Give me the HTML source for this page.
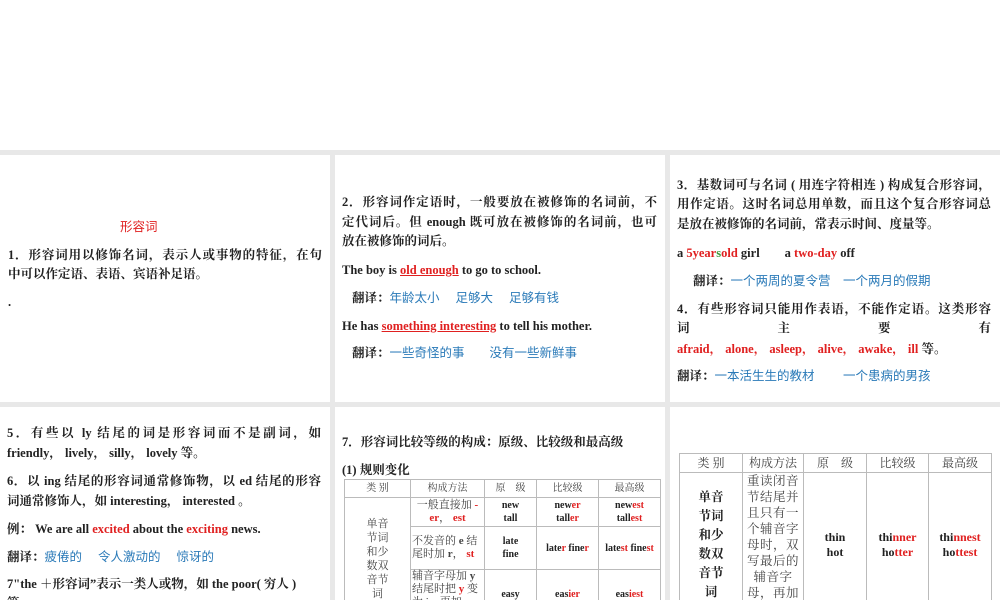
<!DOCTYPE html>
<html><head><meta charset="utf-8"><style>
*{margin:0;padding:0;box-sizing:border-box}
body{width:1000px;height:600px;background:#e8e8e8;position:relative;overflow:hidden;font-family:"Liberation Serif","Noto Serif CJK SC",serif;font-weight:700;color:#222}
.p{position:absolute;background:#fff;overflow:hidden}
.l{position:absolute;white-space:nowrap;font-size:12.5px;line-height:18px}
.j{text-align:justify;text-align-last:justify;white-space:normal}
.r{color:#e02020}.b{color:#2a7ab8;font-weight:400;font-family:"Liberation Sans","Noto Sans CJK SC",sans-serif}
.g{color:#3a9a3a}
.u{text-decoration:underline}
table{position:absolute;border-collapse:collapse;font-size:10px;table-layout:fixed}
td{border:1px solid #bbb;text-align:center;vertical-align:middle;line-height:13px;padding:0 1px}
.h td{font-weight:400;color:#444;font-family:"Liberation Serif","Noto Serif CJK SC",serif}
.n{font-weight:400;color:#444}
</style></head><body>
<div class="p" style="left:0;top:0;width:1000px;height:150px"></div>
<div class="p" style="left:0;top:155px;width:330px;height:247px">
<div class="l r" style="left:120px;top:63px;font-weight:400;font-family:'Liberation Sans','Noto Sans CJK SC',sans-serif">形容词</div>
<div class="l j" style="left:8px;top:91px;width:314px">1．形容词用以修饰名词，表示人或事物的特征，在句</div>
<div class="l" style="left:8px;top:110px">中可以作定语、表语、宾语补足语。</div>
<div class="l" style="left:8px;top:138px">.</div>
</div>
<div class="p" style="left:335px;top:155px;width:330px;height:247px">
<div class="l j" style="left:7px;top:38px;width:315px">2．形容词作定语时，一般要放在被修饰的名词前，不</div>
<div class="l j" style="left:7px;top:58px;width:315px">定代词后。但 enough 既可放在被修饰的名词前，也可</div>
<div class="l" style="left:7px;top:77px">放在被修饰的词后。</div>
<div class="l" style="left:7px;top:106px">The boy is <span class="r u">old enough</span> to go to school.</div>
<div class="l" style="left:17px;top:134px">翻译：<span class="b">年龄太小　 足够大　 足够有钱</span></div>
<div class="l" style="left:7px;top:162px">He has <span class="r u">something interesting</span> to tell his mother.</div>
<div class="l" style="left:17px;top:189px">翻译：<span class="b">一些奇怪的事　　没有一些新鲜事</span></div>
</div>
<div class="p" style="left:670px;top:155px;width:330px;height:247px">
<div class="l j" style="left:7px;top:21px;width:314px">3．基数词可与名词 ( 用连字符相连 ) 构成复合形容词，</div>
<div class="l j" style="left:7px;top:40px;width:314px">用作定语。这时名词总用单数，而且这个复合形容词总</div>
<div class="l" style="left:7px;top:60px">是放在被修饰的名词前，常表示时间、度量等。</div>
<div class="l" style="left:7px;top:89px">a <span class="r">5year<span class="g">s</span>old</span> girl　　a <span class="r">two-day</span> off</div>
<div class="l" style="left:23px;top:117px">翻译：<span class="b">一个两周的夏令营　一个两月的假期</span></div>
<div class="l j" style="left:7px;top:145px;width:314px">4．有些形容词只能用作表语，不能作定语。这类形容</div>
<div class="l j" style="left:7px;top:164px;width:314px">词 主 要 有</div>
<div class="l r" style="left:7px;top:185px">afraid， alone， asleep， alive， awake， ill <span style="color:#222">等。</span></div>
<div class="l" style="left:7px;top:212px">翻译：<span class="b">一本活生生的教材　　 一个患病的男孩</span></div>
</div>
<div class="p" style="left:0;top:407px;width:330px;height:193px">
<div class="l j" style="left:7px;top:17px;width:314px">5．有些以 ly 结尾的词是形容词而不是副词，如</div>
<div class="l" style="left:7px;top:37px">friendly， lively， silly， lovely 等。</div>
<div class="l j" style="left:7px;top:65px;width:314px">6．以 ing 结尾的形容词通常修饰物，以 ed 结尾的形容</div>
<div class="l" style="left:7px;top:85px">词通常修饰人，如 interesting， interested 。</div>
<div class="l" style="left:7px;top:113px">例： We are all <span class="r">excited</span> about the <span class="r">exciting</span> news.</div>
<div class="l" style="left:7px;top:141px">翻译：<span class="b">疲倦的　 令人激动的　 惊讶的</span></div>
<div class="l" style="left:7px;top:168px">7"the ＋形容词”表示一类人或物，如 the poor( 穷人 )</div>
<div class="l" style="left:7px;top:187px">等。</div>
</div>
<div class="p" style="left:335px;top:407px;width:330px;height:193px">
<div class="l" style="left:7px;top:26px">7．形容词比较等级的构成：原级、比较级和最高级</div>
<div class="l" style="left:7px;top:54px">(1) 规则变化</div>
<table style="left:9px;top:72px;width:316px">
<col style="width:66px"><col style="width:74px"><col style="width:52px"><col style="width:62px"><col style="width:62px">
<tr class="h" style="height:18px"><td>类 别</td><td>构成方法</td><td>原　级</td><td>比较级</td><td>最高级</td></tr>
<tr style="height:29px"><td rowspan="3" class="n" style="font-size:11px;line-height:14px">单音<br>节词<br>和少<br>数双<br>音节<br>词</td><td class="n" style="font-size:11px">一般直接加 <b class="r">-<br>er</b>， <b class="r">est</b></td><td>new<br>tall</td><td>new<span class="r">er</span><br>tall<span class="r">er</span></td><td>new<span class="r">est</span><br>tall<span class="r">est</span></td></tr>
<tr style="height:43px"><td class="n" style="text-align:left;font-size:11px">不发音的 <b>e</b> 结尾时加 <b>r</b>， <b class="r">st</b></td><td>late<br>fine</td><td>late<span class="r">r</span> fine<span class="r">r</span></td><td>late<span class="r">st</span> fine<span class="r">st</span></td></tr>
<tr style="height:50px"><td class="n" style="text-align:left;vertical-align:top;font-size:11px">辅音字母加 <b>y</b> 结尾时把 <b class="r">y</b> 变为 i，再加</td><td>easy</td><td>eas<span class="r">ier</span></td><td>eas<span class="r">iest</span></td></tr>
</table>
</div>
<div class="p" style="left:670px;top:407px;width:330px;height:193px">
<table style="left:9px;top:46px;width:312px;font-size:11px">
<col style="width:63px"><col style="width:61px"><col style="width:63px"><col style="width:62px"><col style="width:63px">
<tr class="h" style="height:19px"><td style="font-size:12px">类 别</td><td style="font-size:12px">构成方法</td><td style="font-size:12px">原　级</td><td style="font-size:12px">比较级</td><td style="font-size:12px">最高级</td></tr>
<tr style="height:140px"><td style="font-size:12.5px;line-height:19px">单音<br>节词<br>和少<br>数双<br>音节<br>词</td><td class="n" style="font-size:12.5px;line-height:16px;vertical-align:top;padding:0 2px;letter-spacing:0.5px">重读闭音节结尾并且只有一个辅音字母时，双写最后的辅音字母，再加 <b class="r">er</b>，</td><td style="font-size:12px;line-height:15px">thin<br>hot</td><td style="font-size:12px;line-height:15px">thi<span class="r">nner</span><br>ho<span class="r">tter</span></td><td style="font-size:12px;line-height:15px">thi<span class="r">nnest</span><br>ho<span class="r">ttest</span></td></tr>
</table>
</div>
</body></html>
